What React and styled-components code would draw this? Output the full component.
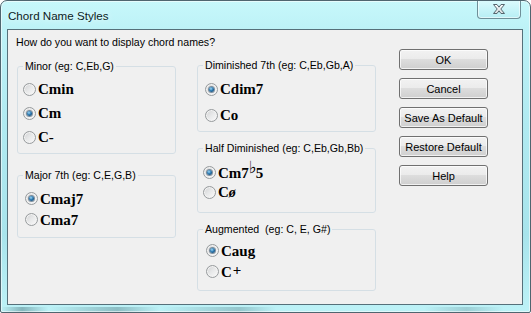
import React, { useState } from "react"
import styled, { createGlobalStyle } from "styled-components"

const GlobalStyle = createGlobalStyle`
  html, body {
    margin: 0;
    padding: 0;
    background: #fff;
  }
`

const Frame = styled.div`
  box-sizing: border-box;
  width: 531px;
  height: 313px;
  display: flex;
  flex-direction: column;
  border: 1px solid #4f6670;
  border-radius: 7px 7px 2px 2px;
  background:
    linear-gradient(90deg, rgba(30,70,80,0) 0%, rgba(30,70,80,.35) 4%, rgba(30,70,80,0) 9%,
      rgba(30,70,80,.3) 22%, rgba(30,70,80,0) 30%, rgba(30,70,80,.25) 45%, rgba(30,70,80,0) 52%,
      rgba(30,70,80,0) 80%, rgba(30,70,80,.2) 88%, rgba(30,70,80,0) 95%) bottom / 100% 5px no-repeat,
    linear-gradient(180deg, #c7f8fb 0%, #bdf2f7 9%, #b0eaf1 40%, #a8e4ec 75%, #bdf2f7 100%);
  box-shadow: inset 0 0 0 1px rgba(255,255,255,.55);
  font-family: "Liberation Sans", Arial, sans-serif;
  overflow: hidden;
`

const TitleBar = styled.div`
  height: 28px;
  display: flex;
  align-items: center;
  justify-content: space-between;
  padding-left: 7px;
`

const Title = styled.span`
  font-size: 11.6px;
  color: #0c1c24;
  text-shadow: 0 0 6px rgba(255,255,255,.9);
`

const CloseButton = styled.div`
  align-self: flex-start;
  box-sizing: border-box;
  width: 44px;
  height: 19px;
  margin-top: -1px;
  margin-right: 9px;
  display: flex;
  align-items: center;
  justify-content: center;
  border: 1px solid #6f8f98;
  border-top: none;
  border-radius: 0 0 4px 4px;
  background: linear-gradient(180deg, #dcfbfd 0%, #c9f5f9 50%, #b7eef4 100%);
  box-shadow: inset 0 0 0 1px rgba(255,255,255,.55);
`

const Client = styled.div`
  flex: 1;
  display: flex;
  margin: 0 7px 7px 6px;
  border: 1px solid #56707a;
  background: #f0f0f0;
`

const Main = styled.div`
  display: flex;
  flex-direction: column;
  padding: 6px 0 0 8px;
`

const Prompt = styled.div`
  font-size: 10.6px;
  line-height: 13px;
  color: #000;
`

const Columns = styled.div`
  display: flex;
  align-items: flex-start;
  gap: 21px;
  margin-top: 10px;
  padding-left: 1px;
`

const Column = styled.div`
  display: flex;
  flex-direction: column;
  width: ${p => p.$width}px;
  gap: ${p => p.$gap}px;
  margin-top: ${p => p.$offset || 0}px;
`

const Group = styled.fieldset`
  box-sizing: border-box;
  margin: 0;
  padding: ${p => p.$top}px 0 0 0;
  height: ${p => p.$height}px;
  border: 1px solid #d5dfe5;
  border-radius: 3px;
  min-width: 0;
`

const Legend = styled.legend`
  margin-left: 5px;
  padding: 0 2px;
  font-size: 10.6px;
  line-height: 13px;
  color: #000;
  white-space: pre;
`

const Option = styled.label`
  display: flex;
  align-items: center;
  height: ${p => p.$row}px;
  padding-left: ${p => p.$indent}px;
  cursor: default;
`

const Radio = styled.span`
  box-sizing: border-box;
  position: relative;
  flex: none;
  width: 13px;
  height: 13px;
  margin-right: 2px;
  border-radius: 50%;
  border: 1px solid #979b9d;
  background: linear-gradient(135deg, #cfd0d1 0%, #e6e7e8 45%, #fbfbfb 100%);
  box-shadow: inset 0 0 0 1px #f3f3f3;

  &::after {
    content: "";
    display: ${p => (p.$checked ? "block" : "none")};
    position: absolute;
    left: 3px;
    top: 3px;
    width: 5px;
    height: 5px;
    border-radius: 50%;
    background: radial-gradient(circle at 40% 35%, #9fd8f5 0%, #2b78b0 45%, #0d3558 100%);
    box-shadow: 0 0 0 1px rgba(40,70,95,.55);
  }
`

const Chord = styled.span`
  font-family: "Liberation Serif", "Times New Roman", serif;
  font-weight: bold;
  font-size: 15px;
  line-height: 16px;
  color: #000;
  white-space: nowrap;
`

const Flat = styled.span`
  font-family: "DejaVu Sans", sans-serif;
  font-weight: normal;
  font-size: 17px;
  position: relative;
  top: -5px;
  margin: 0 -1px 0 0;
`

const Slashed = styled.span`
  font-style: italic;
  font-size: 14px;
`

const Plus = styled.span`
  font-size: 15px;
  position: relative;
  top: -2px;
  margin-left: 1px;
`

const Buttons = styled.div`
  display: flex;
  flex-direction: column;
  gap: 8px;
  margin: 19px 34px 0 auto;
`

const Button = styled.button`
  box-sizing: border-box;
  width: 89px;
  height: 21px;
  padding: 0;
  border: 1px solid #707070;
  border-radius: 3px;
  background: linear-gradient(180deg, #f2f2f2 0%, #ebebeb 49%, #dddddd 50%, #cfcfcf 100%);
  box-shadow: inset 0 0 0 1px rgba(255,255,255,.7);
  font-family: "Liberation Sans", Arial, sans-serif;
  font-size: 11px;
  color: #000;
`

const CloseGlyph = () => (
  <svg width="14" height="12" viewBox="0 0 14 12">
    <defs>
      <linearGradient id="xg" x1="0" y1="0" x2="0" y2="1">
        <stop offset="0" stopColor="#ffffff" />
        <stop offset="1" stopColor="#d6dcdf" />
      </linearGradient>
    </defs>
    <path
      d="M1.5 1.5 H5 L7 4.2 L9 1.5 H12.5 L8.8 6 L12.5 10.5 H9 L7 7.8 L5 10.5 H1.5 L5.2 6 Z"
      fill="url(#xg)"
      stroke="#55666e"
      strokeWidth="1"
      strokeLinejoin="round"
    />
  </svg>
)

const groups = {
  minor: {
    legend: "Minor (eg: C,Eb,G)", height: 94, top: 4, row: 24, indent: 5,
    options: [
      { id: "cmin", label: <Chord>Cmin</Chord> },
      { id: "cm", label: <Chord>Cm</Chord> },
      { id: "cdash", label: <Chord>C-</Chord> },
    ],
  },
  major: {
    legend: "Major 7th (eg: C,E,G,B)", height: 69, top: 6, row: 21, indent: 7,
    options: [
      { id: "cmaj7", label: <Chord>Cmaj7</Chord> },
      { id: "cma7", label: <Chord>Cma7</Chord> },
    ],
  },
  dim: {
    legend: "Diminished 7th (eg: C,Eb,Gb,A)", height: 73, top: 4, row: 26, indent: 7,
    options: [
      { id: "cdim7", label: <Chord>Cdim7</Chord> },
      { id: "co", label: <Chord>Co</Chord> },
    ],
  },
  half: {
    legend: "Half Diminished (eg: C,Eb,Gb,Bb)", height: 71, top: 7, row: 20, indent: 5,
    options: [
      { id: "cm7b5", label: <Chord>Cm7<Flat>♭</Flat>5</Chord> },
      { id: "cslash", label: <Chord>C<Slashed>ø</Slashed></Chord> },
    ],
  },
  aug: {
    legend: "Augmented  (eg: C, E, G#)", height: 68, top: 4, row: 21, indent: 8,
    options: [
      { id: "caug", label: <Chord>Caug</Chord> },
      { id: "cplus", label: <Chord>C<Plus>+</Plus></Chord> },
    ],
  },
}

const ChordGroup = ({ group, value, onChange }) => (
  <Group $height={group.height} $top={group.top}>
    <Legend>{group.legend}</Legend>
    {group.options.map(opt => (
      <Option key={opt.id} $row={group.row} $indent={group.indent} onClick={() => onChange(opt.id)}>
        <Radio $checked={value === opt.id} />
        {opt.label}
      </Option>
    ))}
  </Group>
)

export default function App() {
  const [choice, setChoice] = useState({
    minor: "cm",
    major: "cmaj7",
    dim: "cdim7",
    half: "cm7b5",
    aug: "caug",
  })

  const pick = key => id => setChoice(c => ({ ...c, [key]: id }))

  return (
    <>
      <GlobalStyle />
      <Frame>
        <TitleBar>
          <Title>Chord Name Styles</Title>
          <CloseButton>
            <CloseGlyph />
          </CloseButton>
        </TitleBar>
        <Client>
          <Main>
            <Prompt>How do you want to display chord names?</Prompt>
            <Columns>
              <Column $width={159} $gap={15} $offset={1}>
                <ChordGroup group={groups.minor} value={choice.minor} onChange={pick("minor")} />
                <ChordGroup group={groups.major} value={choice.major} onChange={pick("major")} />
              </Column>
              <Column $width={179} $gap={10}>
                <ChordGroup group={groups.dim} value={choice.dim} onChange={pick("dim")} />
                <ChordGroup group={groups.half} value={choice.half} onChange={pick("half")} />
                <ChordGroup group={groups.aug} value={choice.aug} onChange={pick("aug")} />
              </Column>
            </Columns>
          </Main>
          <Buttons>
            <Button>OK</Button>
            <Button>Cancel</Button>
            <Button>Save As Default</Button>
            <Button>Restore Default</Button>
            <Button>Help</Button>
          </Buttons>
        </Client>
      </Frame>
    </>
  )
}
